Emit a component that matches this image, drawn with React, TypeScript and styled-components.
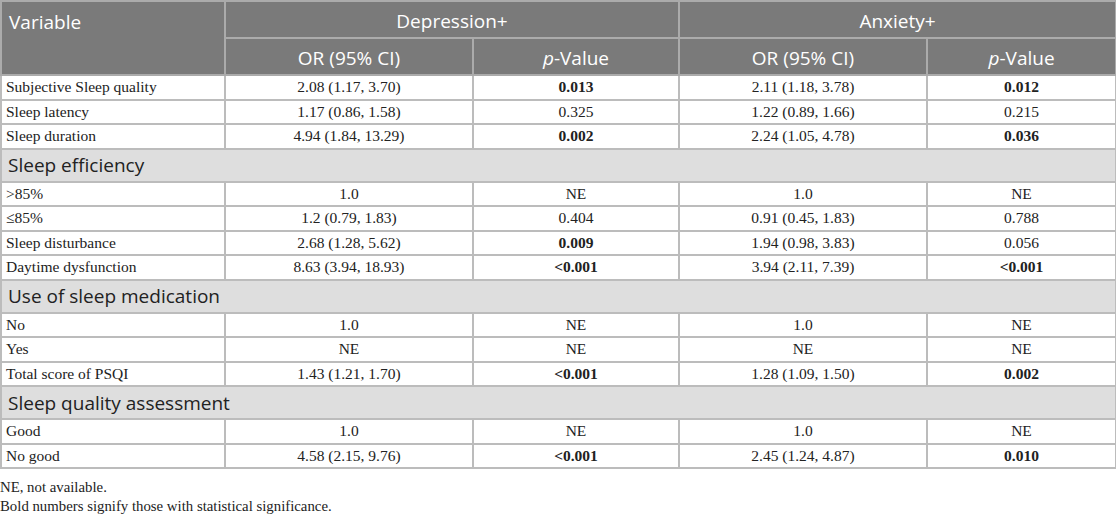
import React from "react";
import styled, { createGlobalStyle } from "styled-components";

const GlobalStyle = createGlobalStyle`
  html, body {
    margin: 0;
    padding: 0;
    background: #ffffff;
  }
`;

const Page = styled.div`
  width: 1116px;
  font-family: "Liberation Serif", "Times New Roman", serif;
  color: #222;
`;

const Table = styled.table`
  width: 1115px;
  border-collapse: collapse;
  table-layout: fixed;
  border: 2px solid #b8b8b8;
`;

const HeadCell = styled.th<{ $align?: string }>`
  background: #7a7a7a;
  color: #ffffff;
  font-family: "Open Sans", "Noto Sans", sans-serif;
  font-weight: 400;
  font-size: 19px;
  text-align: ${(p) => p.$align || "center"};
  vertical-align: ${(p) => (p.$align === "left" ? "top" : "middle")};
  padding: ${(p) => (p.$align === "left" ? "7px 7px 0" : "3px 6px 0")};
  border: 2px solid #ababab;
  height: 32px;
`;

const Cell = styled.td<{ $left?: boolean; $bold?: boolean }>`
  font-size: 15.5px;
  font-weight: ${(p) => (p.$bold ? 700 : 400)};
  text-align: ${(p) => (p.$left ? "left" : "center")};
  padding: 0 4px;
  height: 22.5px;
  border: 2px solid #bcbcbc;
  white-space: nowrap;
`;

const SectionCell = styled.td`
  background: #dedede;
  font-family: "Open Sans", "Noto Sans", sans-serif;
  font-size: 19px;
  color: #222;
  padding: 0 6px;
  height: 31px;
  border: 2px solid #bcbcbc;
`;

const Notes = styled.div`
  padding: 9px 0 0 0;
  font-size: 14.8px;
  line-height: 19px;
  color: #222;
`;

type Row =
  | { section: string }
  | { label: string; values: [string, string, string, string]; bold: [boolean, boolean] };

const rows: Row[] = [
  { label: "Subjective Sleep quality", values: ["2.08 (1.17, 3.70)", "0.013", "2.11 (1.18, 3.78)", "0.012"], bold: [true, true] },
  { label: "Sleep latency", values: ["1.17 (0.86, 1.58)", "0.325", "1.22 (0.89, 1.66)", "0.215"], bold: [false, false] },
  { label: "Sleep duration", values: ["4.94 (1.84, 13.29)", "0.002", "2.24 (1.05, 4.78)", "0.036"], bold: [true, true] },
  { section: "Sleep efficiency" },
  { label: ">85%", values: ["1.0", "NE", "1.0", "NE"], bold: [false, false] },
  { label: "≤85%", values: ["1.2 (0.79, 1.83)", "0.404", "0.91 (0.45, 1.83)", "0.788"], bold: [false, false] },
  { label: "Sleep disturbance", values: ["2.68 (1.28, 5.62)", "0.009", "1.94 (0.98, 3.83)", "0.056"], bold: [true, false] },
  { label: "Daytime dysfunction", values: ["8.63 (3.94, 18.93)", "<0.001", "3.94 (2.11, 7.39)", "<0.001"], bold: [true, true] },
  { section: "Use of sleep medication" },
  { label: "No", values: ["1.0", "NE", "1.0", "NE"], bold: [false, false] },
  { label: "Yes", values: ["NE", "NE", "NE", "NE"], bold: [false, false] },
  { label: "Total score of PSQI", values: ["1.43 (1.21, 1.70)", "<0.001", "1.28 (1.09, 1.50)", "0.002"], bold: [true, true] },
  { section: "Sleep quality assessment" },
  { label: "Good", values: ["1.0", "NE", "1.0", "NE"], bold: [false, false] },
  { label: "No good", values: ["4.58 (2.15, 9.76)", "<0.001", "2.45 (1.24, 4.87)", "0.010"], bold: [true, true] },
];

const PValue = () => (
  <>
    <i>p</i>-Value
  </>
);

export default function App() {
  return (
    <Page>
      <GlobalStyle />
      <Table>
        <colgroup>
          <col style={{ width: 224 }} />
          <col style={{ width: 248 }} />
          <col style={{ width: 206 }} />
          <col style={{ width: 248 }} />
          <col style={{ width: 189 }} />
        </colgroup>
        <thead>
          <tr>
            <HeadCell $align="left" rowSpan={2}>Variable</HeadCell>
            <HeadCell colSpan={2}>Depression+</HeadCell>
            <HeadCell colSpan={2}>Anxiety+</HeadCell>
          </tr>
          <tr>
            <HeadCell>OR (95% CI)</HeadCell>
            <HeadCell><PValue /></HeadCell>
            <HeadCell>OR (95% CI)</HeadCell>
            <HeadCell><PValue /></HeadCell>
          </tr>
        </thead>
        <tbody>
          {rows.map((r, i) =>
            "section" in r ? (
              <tr key={i}>
                <SectionCell colSpan={5}>{r.section}</SectionCell>
              </tr>
            ) : (
              <tr key={i}>
                <Cell $left>{r.label}</Cell>
                <Cell>{r.values[0]}</Cell>
                <Cell $bold={r.bold[0]}>{r.values[1]}</Cell>
                <Cell>{r.values[2]}</Cell>
                <Cell $bold={r.bold[1]}>{r.values[3]}</Cell>
              </tr>
            )
          )}
        </tbody>
      </Table>
      <Notes>
        <div>NE, not available.</div>
        <div>Bold numbers signify those with statistical significance.</div>
      </Notes>
    </Page>
  );
}
